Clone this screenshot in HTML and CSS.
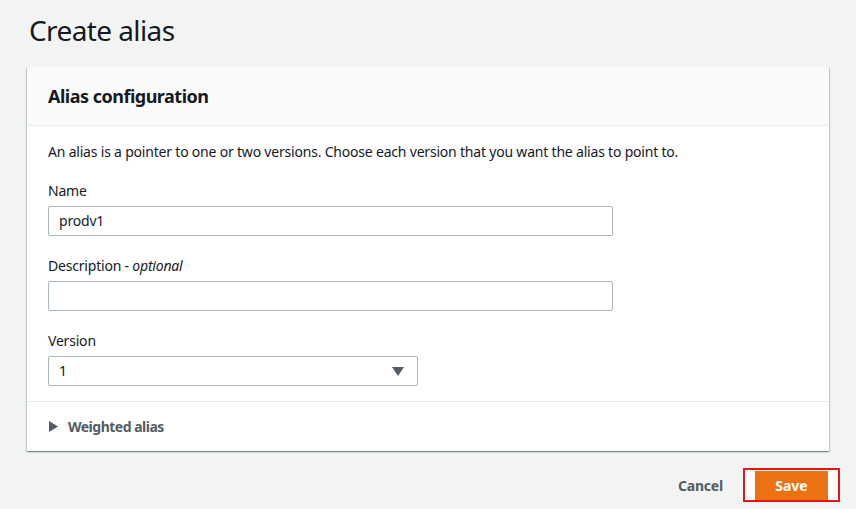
FILE: index.html
```html
<!DOCTYPE html>
<html>
<head>
<meta charset="utf-8">
<link rel="stylesheet" href="styles.css">
</head>
<body>
<div class="page">
  <h1 class="title">Create alias</h1>
  <div class="card">
    <div class="card-header"><h2>Alias configuration</h2></div>
    <div class="card-body">
      <p class="desc">An alias is a pointer to one or two versions. Choose each version that you want the alias to point to.</p>
      <div class="field">
        <label class="label">Name</label>
        <div class="input wide">prodv1</div>
      </div>
      <div class="field">
        <label class="label">Description - <i>optional</i></label>
        <div class="input wide"></div>
      </div>
      <div class="field">
        <label class="label">Version</label>
        <div class="input select"><span>1</span><svg class="caret" width="12" height="9" viewBox="0 0 12 9"><path d="M0 0H12L6 9Z" fill="#545b64"/></svg></div>
      </div>
    </div>
    <div class="card-footer">
      <svg class="tri" width="9" height="11" viewBox="0 0 9 11"><path d="M0 0L9 5.5L0 11Z" fill="#545b64"/></svg>
      <span>Weighted alias</span>
    </div>
  </div>
  <div class="actions">
    <span class="cancel">Cancel</span>
    <div class="highlight"><span class="save">Save</span></div>
  </div>
</div>
</body>
</html>
```
FILE: styles.css
```css
html, body {
  margin: 0;
  padding: 0;
  background: #f2f3f3;
  font-family: "Noto Sans", "Open Sans", sans-serif;
  color: #16191f;
}
.page {
  padding: 10px 0 0 27px;
  width: 802px;
}
.title {
  margin: 0 0 0 2px;
  font-size: 28px;
  font-weight: 400;
  line-height: 40px;
  height: 57px;
  letter-spacing: -0.6px;
}
.card {
  background: #fff;
  box-shadow: 0 1px 1px 0 rgba(0,28,36,.3), 1px 1px 1px 0 rgba(0,28,36,.15), -1px 1px 1px 0 rgba(0,28,36,.15);
}
.card-header {
  background: #fafafa;
  border-bottom: 1px solid #eaeded;
  height: 58px;
  padding: 0 21px;
  display: flex;
  align-items: center;
}
.card-header h2 {
  margin: 0;
  font-size: 18px;
  font-weight: 700;
  line-height: 22px;
  letter-spacing: -0.5px;
}
.card-body {
  padding: 15px 21px 15px;
  border-bottom: 1px solid #eaeded;
  letter-spacing: -0.2px;
}
.desc {
  margin: 0;
  font-size: 14px;
  line-height: 22px;
}
.field {
  display: flex;
  flex-direction: column;
  margin-top: 17px;
}
.field + .field { margin-top: 19px; }
.label {
  font-size: 14px;
  line-height: 22px;
  margin-bottom: 4px;
}
.input {
  box-sizing: border-box;
  height: 30px;
  border: 1px solid #aab7b8;
  border-radius: 2px;
  padding: 0 10px;
  font-size: 14px;
  line-height: 28px;
  display: flex;
  align-items: center;
}
.wide { width: 565px; }
.select {
  width: 370px;
  justify-content: space-between;
  padding-right: 13px;
}
.card-footer {
  height: 49px;
  padding: 0 21px;
  display: flex;
  align-items: center;
  gap: 10px;
  font-size: 14px;
  font-weight: 700;
  color: #545b64;
  letter-spacing: -0.5px;
}
.tri { margin-left: 1px; }
.actions {
  display: flex;
  justify-content: flex-end;
  align-items: center;
  margin-top: 17px;
  margin-right: -11px;
  gap: 20px;
}
.cancel {
  font-size: 14px;
  font-weight: 700;
  color: #545b64;
  letter-spacing: -0.2px;
}
.highlight {
  border: 2px solid #e8111d;
  background: #fff;
  padding: 1px 10px 0 10px;
  display: flex;
}
.save {
  background: #ec7211;
  color: #fff;
  font-size: 14px;
  font-weight: 700;
  width: 73px;
  height: 29px;
  line-height: 29px;
  text-align: center;
}
```
